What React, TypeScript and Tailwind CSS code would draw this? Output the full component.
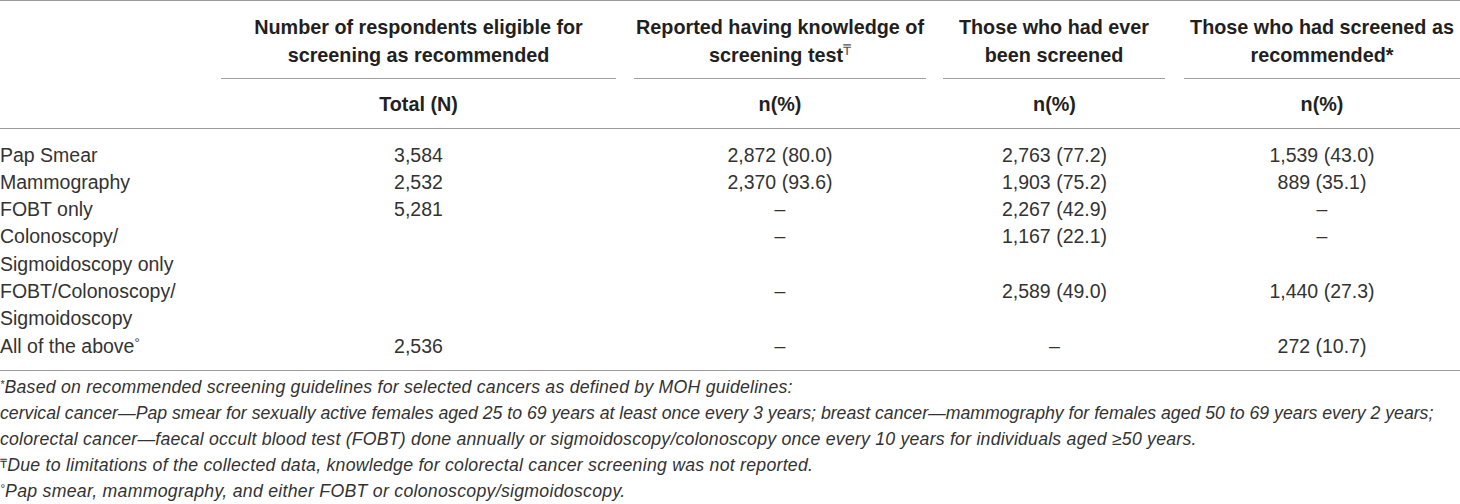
import React from "react";

const rows: { label: React.ReactNode; c: string[] }[] = [
  { label: "Pap Smear", c: ["3,584", "2,872 (80.0)", "2,763 (77.2)", "1,539 (43.0)"] },
  { label: "Mammography", c: ["2,532", "2,370 (93.6)", "1,903 (75.2)", "889 (35.1)"] },
  { label: "FOBT only", c: ["5,281", "–", "2,267 (42.9)", "–"] },
  {
    label: (
      <>
        Colonoscopy/
        <br />
        Sigmoidoscopy only
      </>
    ),
    c: ["", "–", "1,167 (22.1)", "–"],
  },
  {
    label: (
      <>
        FOBT/Colonoscopy/
        <br />
        Sigmoidoscopy
      </>
    ),
    c: ["", "–", "2,589 (49.0)", "1,440 (27.3)"],
  },
  {
    label: (
      <>
        All of the above<span className="text-[13px] leading-none relative top-[-6px]">°</span>
      </>
    ),
    c: ["2,536", "–", "–", "272 (10.7)"],
  },
];

const cols = "grid grid-cols-[212px_413px_310px_239px_286px]";

export default function App() {
  return (
    <div
      className="w-[1460px] h-[504px] bg-white text-[#333] overflow-hidden"
      style={{ fontFamily: '"Liberation Sans", Arial, sans-serif' }}
    >
      {/* top rule */}
      <div className="border-t border-[#9a9a9a]" />
      {/* header row 1 */}
      <div className={`${cols} pt-[13px] text-[19.8px] leading-[27.5px] font-bold text-[#231f20]`}>
        <div />
        <div className="pl-[9px] pr-[9px]">
          <div className="border-b border-[#a0a0a0] pb-[9px] text-center">
            Number of respondents eligible for
            <br />
            screening as recommended
          </div>
        </div>
        <div className="pl-[9px] pr-[9px]">
          <div className="border-b border-[#a0a0a0] pb-[9px] text-center">
            Reported having knowledge of
            <br />
            screening test
            <span className="text-[15px] font-normal text-[#555] relative top-[-7px] leading-none">₸</span>
          </div>
        </div>
        <div className="pl-[8px] pr-[9px]">
          <div className="border-b border-[#a0a0a0] pb-[9px] text-center">
            Those who had ever
            <br />
            been screened
          </div>
        </div>
        <div className="pl-[10px]">
          <div className="border-b border-[#a0a0a0] pb-[9px] text-center">
            Those who had screened as
            <br />
            recommended*
          </div>
        </div>
      </div>
      {/* header row 2 */}
      <div
        className={`${cols} pt-[12px] pb-[9px] border-b border-[#9a9a9a] text-[19.8px] leading-[27.5px] font-bold text-[#231f20]`}
      >
        <div />
        <div className="text-center">Total (N)</div>
        <div className="text-center">n(%)</div>
        <div className="text-center">n(%)</div>
        <div className="pl-[10px] text-center">n(%)</div>
      </div>
      {/* body */}
      <div className="pt-[13px] pb-[10px] border-b border-[#9a9a9a] text-[19.5px] leading-[27.3px]">
        {rows.map((r, i) => (
          <div key={i} className={`${cols} items-start`}>
            <div>{r.label}</div>
            <div className="text-center">{r.c[0]}</div>
            <div className="text-center">{r.c[1]}</div>
            <div className="text-center">{r.c[2]}</div>
            <div className="pl-[10px] text-center">{r.c[3]}</div>
          </div>
        ))}
      </div>
      {/* footnotes */}
      <div
        className="pt-[3px] italic text-[17.7px] leading-[26px] text-[#333] whitespace-nowrap"
        style={{ fontFamily: '"Liberation Sans", Arial, sans-serif' }}
      >
        <div className="h-[26px] tracking-[0.22px]">
          <span className="text-[11px] leading-none relative top-[-5px]">*</span>Based on recommended screening guidelines for selected cancers as defined by MOH guidelines:
        </div>
        <div className="h-[26px]">
          cervical cancer—Pap smear for sexually active females aged 25 to 69 years at least once every 3 years; breast cancer—mammography for females aged 50 to 69 years every 2 years;
        </div>
        <div className="h-[26px] tracking-[0.22px]">
          colorectal cancer—faecal occult blood test (FOBT) done annually or sigmoidoscopy/colonoscopy once every 10 years for individuals aged ≥50 years.
        </div>
        <div className="h-[26px] tracking-[0.25px]">
          <span className="text-[13px] leading-none not-italic relative top-[-3px]">₸</span>Due to limitations of the collected data, knowledge for colorectal cancer screening was not reported.
        </div>
        <div className="h-[26px] tracking-[0.28px]">
          <span className="text-[12px] leading-none relative top-[-4px]">°</span>Pap smear, mammography, and either FOBT or colonoscopy/sigmoidoscopy.
        </div>
      </div>
    </div>
  );
}
